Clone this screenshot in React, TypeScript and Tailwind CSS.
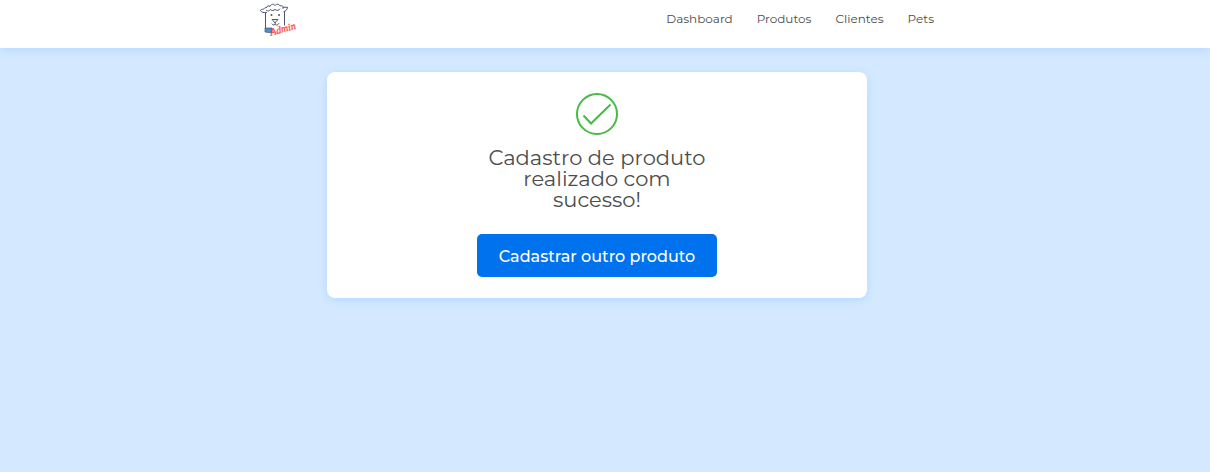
const links = ['Dashboard', 'Produtos', 'Clientes', 'Pets'];

function Logo() {
  return (
    <svg width="40" height="38" viewBox="0 0 40 38" fill="none" aria-label="Admin">
      <g stroke="#4d5275" strokeWidth="1" strokeLinecap="round" strokeLinejoin="round">
        <path d="M9.5 6.5C8 6.300 7.500 7.500 6.500 8C5 8.400 3.500 8.500 3.500 9.500C4.500 11.500 7 12 9.500 11.500" />
        <path d="M9.500 6.500C10 4.500 12 4.500 13 5.500C13.500 3 17 2.500 18 4.500C19.500 2.500 22.500 3 23 5C25 4 27 5.500 26 7.500" />
        <path d="M9.500 9.500C11 10.500 12.500 10 13.200 8.500C15 10 17 9.500 18 8.500C20 10 22 9.500 22.800 8" />
        <path d="M26 6.500C27.500 5.500 28.500 6.800 30.500 6.200C30.200 8.500 29 10 27 10.500" />
        <path d="M8.500 11.500V27.500M27.500 10.500V24" />
        <path d="M15.500 18.500H21L18.200 21.500ZM18.200 21.500V23M15 23C16 24.700 17.600 24.200 18.200 23C19 24.700 21 24.500 21.800 22.500" />
      </g>
      <circle cx="14.500" cy="14" r="1" fill="#4d5275" />
      <circle cx="22" cy="14" r="1" fill="#4d5275" />
      <path d="M8 27H15V32L8 31Z" fill="#4b8fd0" stroke="#4d5275" strokeWidth=".7" />
      <text
        x="14"
        y="34.500"
        transform="rotate(-15 14 34.500)"
        fill="#f45b55"
        stroke="#f45b55"
        strokeWidth=".4"
        fontSize="10"
        fontStyle="italic"
        fontFamily="'Liberation Serif', serif"
      >
        Admin
      </text>
    </svg>
  );
}

function SuccessIcon() {
  return (
    <svg width="42" height="42" viewBox="0 0 42 42" fill="none" stroke="#44bb41" strokeWidth="2" aria-hidden="true">
      <circle cx="21" cy="21" r="20" />
      <path d="M7.500 22.500L15 30.500L34.500 11.500" />
    </svg>
  );
}

export default function App() {
  return (
    <div className="min-h-screen bg-[#d4e9ff] font-[Montserrat,Inter,sans-serif] text-[#4c4c4c]">
      <header className="bg-white pr-4 shadow-[0_2px_10px_#b3d7ff]">
        <div className="mx-auto flex h-12 max-w-[680px] items-start justify-between">
          <a href="#" className="pt-px">
            <Logo />
          </a>
          <nav className="flex gap-6 pt-2.5 pr-[3px] text-xs leading-[18px]">
            {links.map((label) => (
              <a key={label} href="#">
                {label}
              </a>
            ))}
          </nav>
        </div>
      </header>
      <main className="pt-6 pr-4">
        <section className="mx-auto flex max-w-[540px] flex-col items-center rounded-lg bg-white py-[21px] shadow-[0_2px_10px_#b3d7ff]">
          <SuccessIcon />
          <h1 className="mt-3 w-60 text-center text-[21px] leading-[21px] font-normal">
            Cadastro de produto realizado com sucesso!
          </h1>
          <button
            type="button"
            className="mt-6 h-[43px] w-60 cursor-pointer rounded-[5px] bg-[#0072ee] pt-0.5 text-base font-medium text-white"
          >
            Cadastrar outro produto
          </button>
        </section>
      </main>
    </div>
  );
}
